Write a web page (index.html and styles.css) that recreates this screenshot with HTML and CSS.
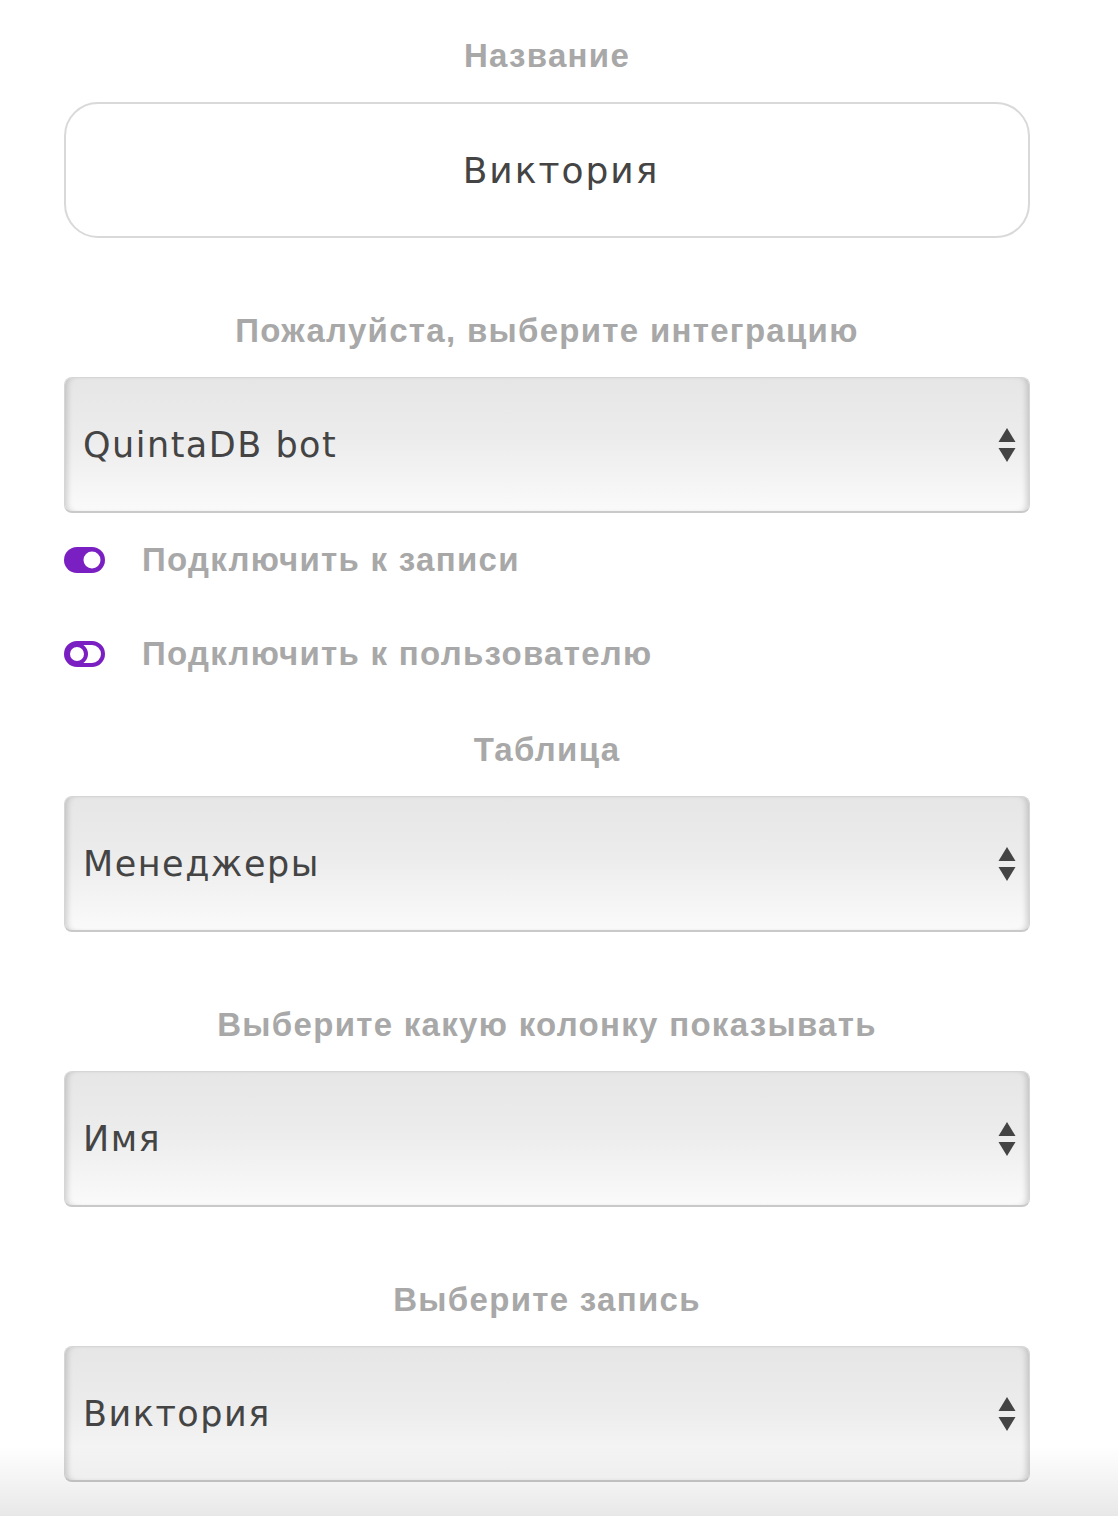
FILE: index.html
```html
<!DOCTYPE html>
<html lang="ru">
<head>
  <meta charset="UTF-8" />
  <meta name="viewport" content="width=device-width, initial-scale=1.0"/>
  <title>Интеграция</title>
  <link rel="stylesheet" href="styles.css">
</head>
<body>
  <form class="form">
    <!-- Название -->
    <label class="field-label" for="name">Название</label>
    <input class="text-input" id="name" type="text" value="Виктория" />

    <!-- Интеграция -->
    <label class="field-label" for="integration">Пожалуйста, выберите интеграцию</label>
    <div class="select-wrap">
      <select id="integration" class="select">
        <option>QuintaDB bot</option>
      </select>
      <svg class="select-arrow" width="18" height="34" viewBox="0 0 18 34">
        <path d="M9 0 L17.5 14 L0.5 14 Z" fill="#444"/>
        <path d="M0.5 20 L17.5 20 L9 34 Z" fill="#444"/>
      </svg>
    </div>

    <div class="toggle-row">
      <svg class="toggle" width="41" height="26" viewBox="0 0 41 26">
        <rect x="0" y="0" width="41" height="26" rx="13" fill="#7a1fc2"/>
        <circle cx="28" cy="13" r="8.5" fill="#fff"/>
      </svg>
      <span class="toggle-label">Подключить к записи</span>
    </div>
    <div class="toggle-row">
      <svg class="toggle" width="41" height="26" viewBox="0 0 41 26">
        <rect x="2" y="2" width="37" height="22" rx="11" fill="#fff" stroke="#7a1fc2" stroke-width="4"/>
        <circle cx="13" cy="13" r="9" fill="#fff" stroke="#7a1fc2" stroke-width="4"/>
      </svg>
      <span class="toggle-label">Подключить к пользователю</span>
    </div>

    <!-- Таблица -->
    <label class="field-label after-toggles" for="table">Таблица</label>
    <div class="select-wrap">
      <select id="table" class="select">
        <option>Менеджеры</option>
      </select>
      <svg class="select-arrow" width="18" height="34" viewBox="0 0 18 34">
        <path d="M9 0 L17.5 14 L0.5 14 Z" fill="#444"/>
        <path d="M0.5 20 L17.5 20 L9 34 Z" fill="#444"/>
      </svg>
    </div>

    <label class="field-label" for="column">Выберите какую колонку показывать</label>
    <div class="select-wrap">
      <select id="column" class="select">
        <option>Имя</option>
      </select>
      <svg class="select-arrow" width="18" height="34" viewBox="0 0 18 34">
        <path d="M9 0 L17.5 14 L0.5 14 Z" fill="#444"/>
        <path d="M0.5 20 L17.5 20 L9 34 Z" fill="#444"/>
      </svg>
    </div>

    <label class="field-label" for="record">Выберите запись</label>
    <div class="select-wrap">
      <select id="record" class="select">
        <option>Виктория</option>
      </select>
      <svg class="select-arrow" width="18" height="34" viewBox="0 0 18 34">
        <path d="M9 0 L17.5 14 L0.5 14 Z" fill="#444"/>
        <path d="M0.5 20 L17.5 20 L9 34 Z" fill="#444"/>
      </svg>
    </div>
  </form>

  <div class="bottom-fade"></div>
</body>
</html>
```

FILE: styles.css
```css
* {
  box-sizing: border-box;
  margin: 0;
  padding: 0;
}

body {
  font-family: 'Liberation Sans', Arial, sans-serif;
  background: #fff;
  overflow: hidden;
}

.form {
  width: 966px;
  margin-left: 64px;
  padding-top: 36px;
  display: flex;
  flex-direction: column;
}

/* Labels */
.field-label {
  display: block;
  font-size: 33px;
  font-weight: bold;
  letter-spacing: 1.3px;
  line-height: 40px;
  color: #a8a8a8;
  text-align: center;
  margin-bottom: 26px;
}

.field-label.after-toggles {
  margin-top: 29px;
}

/* Text input */
.text-input {
  width: 100%;
  height: 136px;
  padding-left: 28px;
  border: 2px solid #d9d9d9;
  border-radius: 34px;
  background: #fff;
  font-family: 'DejaVu Sans', sans-serif;
  font-size: 36px;
  letter-spacing: 2px;
  color: #444;
  text-align: center;
  outline: none;
  margin-bottom: 73px;
}

/* Selects */
.select-wrap {
  position: relative;
  height: 136px;
  margin-bottom: 73px;
}

.select {
  appearance: none;
  -webkit-appearance: none;
  width: 100%;
  height: 100%;
  padding: 0 60px 0 18px;
  border: 1px solid #d6d6d6;
  border-bottom: 2px solid #c9c9c9;
  border-radius: 8px;
  background: linear-gradient(180deg, #e6e6e6 0%, #ececec 45%, #fafafa 100%);
  box-shadow: inset 6px 0 6px -4px rgba(0, 0, 0, 0.18),
              inset -6px 0 6px -4px rgba(0, 0, 0, 0.18);
  font-family: 'DejaVu Sans', sans-serif;
  font-size: 35px;
  letter-spacing: 1.5px;
  color: #444;
  outline: none;
}

.select-arrow {
  position: absolute;
  right: 14px;
  top: 51px;
  pointer-events: none;
}

/* Toggles */
.toggle-row {
  display: flex;
  align-items: center;
  gap: 37px;
  height: 94px;
}

.select-wrap + .toggle-row {
  margin-top: -73px;
}

.toggle {
  flex-shrink: 0;
}

.toggle-label {
  font-size: 33px;
  font-weight: bold;
  letter-spacing: 1.3px;
  color: #a8a8a8;
}

.bottom-fade {
  position: fixed;
  left: 0;
  right: 0;
  bottom: 0;
  height: 70px;
  background: linear-gradient(180deg, rgba(0, 0, 0, 0) 0%, rgba(0, 0, 0, 0.09) 100%);
  pointer-events: none;
}
```
